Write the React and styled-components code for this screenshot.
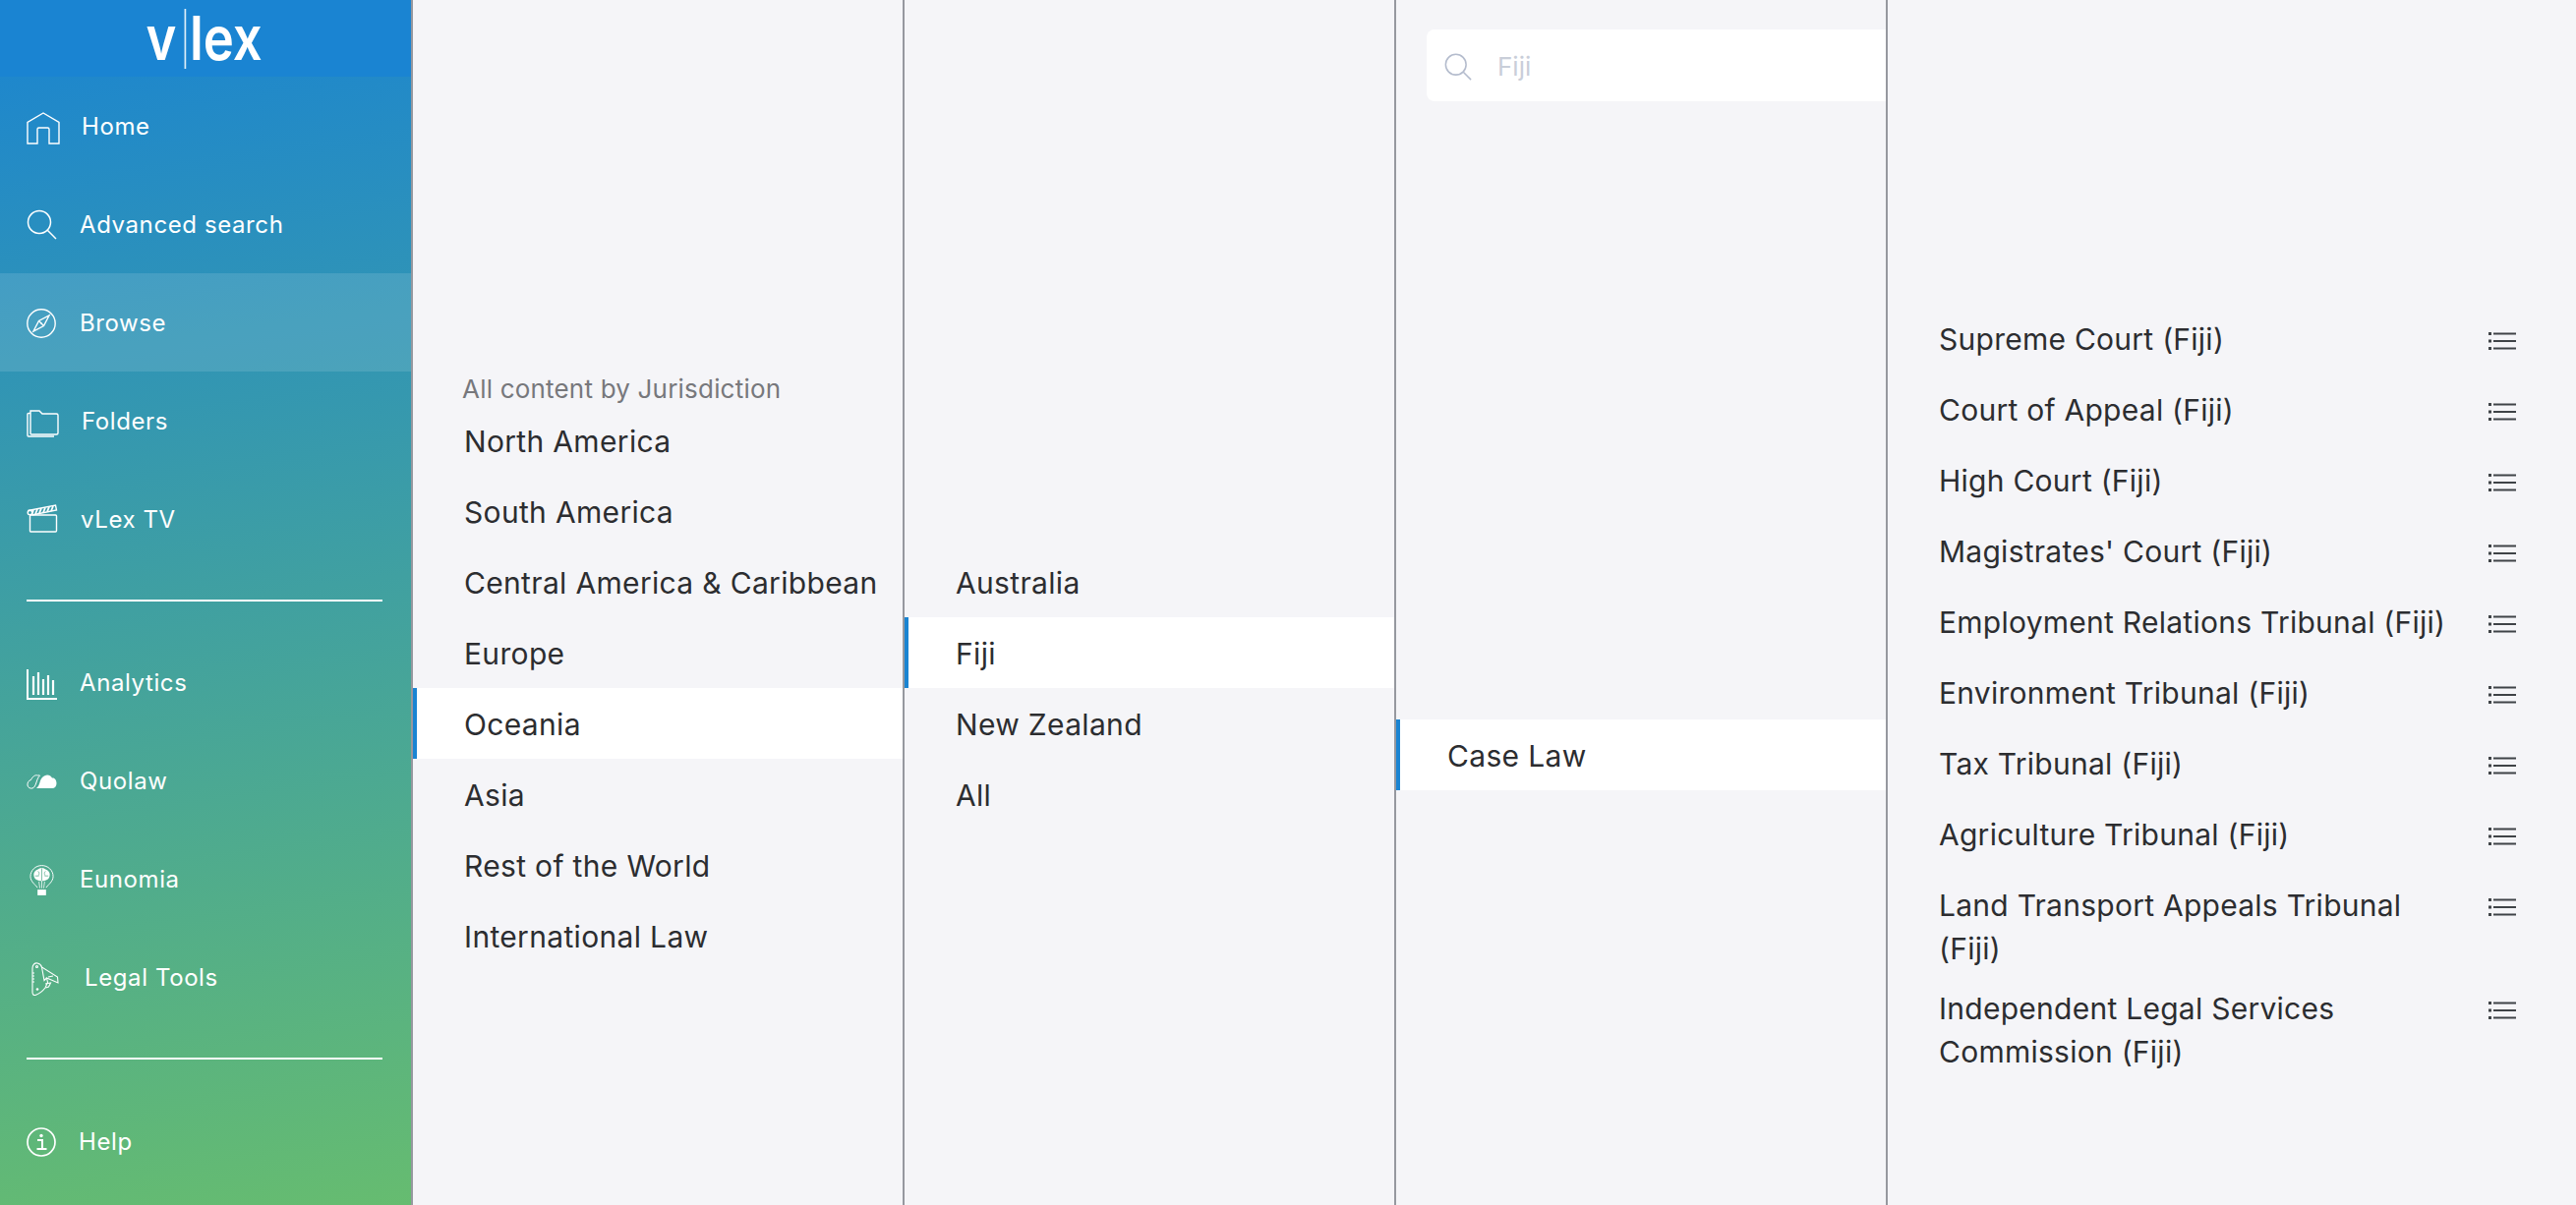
import React from "react";
import styled, { createGlobalStyle } from "styled-components";

const Global = createGlobalStyle`
  html, body { margin: 0; padding: 0; height: 100%; }
  body { font-family: Inter, "Liberation Sans", sans-serif; background: #f5f5f8; overflow: hidden; }
  * { box-sizing: border-box; }
`;

const Page = styled.div`
  display: flex;
  width: 2620px;
  height: 1226px;
  overflow: hidden;
  background: #f5f5f8;
`;

const Sidebar = styled.nav`
  flex: 0 0 420px;
  height: 1226px;
  border-right: 2px solid #96989f;
  background: linear-gradient(172deg, #1a84d2 0%, #66bc70 100%);
  display: flex;
  flex-direction: column;
`;

const Logo = styled.div`
  height: 78px;
  background: #1a84d2;
  display: flex;
  align-items: center;
  justify-content: center;
  flex: none;
`;

const LogoText = styled.span`
  color: #fff;
  font-size: 62px;
  font-weight: 600;
  line-height: 78px;
  display: flex;
  align-items: center;
  transform: scaleX(0.85);
  margin-right: 3px;
`;

const LogoBar = styled.i`
  width: 2px;
  height: 61px;
  background: rgba(255, 255, 255, 0.85);
  margin: 0 4px 0 10px;
`;

const NavItem = styled.a`
  height: 100px;
  flex: none;
  display: flex;
  align-items: center;
  padding-left: 27px;
  color: #fff;
  font-size: 24px;
  letter-spacing: 0.6px;
  background: ${(p) => (p.$active ? "rgba(255,255,255,0.12)" : "transparent")};
`;

const IconSlot = styled.span`
  width: ${(p) => p.$w}px;
  padding-left: ${(p) => p.$pad || 0}px;
  margin-top: ${(p) => p.$dy || 0}px;
  flex: none;
  display: flex;
  align-items: center;
  svg { display: block; }
`;

const Divider = styled.hr`
  margin: ${(p) => p.$m};
  border: 0;
  height: 2px;
  width: 362px;
  background: #fff;
  flex: none;
  align-self: flex-start;
  margin-left: 27px;
`;

const Column = styled.section`
  flex: 0 0 ${(p) => p.$w || 500}px;
  height: 1226px;
  border-right: ${(p) => (p.$last ? "0" : "2px solid #96989f")};
  padding-top: ${(p) => p.$top}px;
  display: flex;
  flex-direction: column;
`;

const Heading = styled.div`
  height: 32px;
  line-height: 31px;
  padding-left: 50px;
  font-size: 26px;
  letter-spacing: 0.2px;
  color: #77787c;
`;

const Row = styled.div`
  height: 72px;
  flex: none;
  display: flex;
  align-items: center;
  padding-top: 2px;
  padding-left: ${(p) => (p.$active ? 48 : 52)}px;
  margin-top: ${(p) => p.$gap || 0}px;
  font-size: 30px;
  letter-spacing: 0.33px;
  color: #2c2d30;
  background: ${(p) => (p.$active ? "#fff" : "transparent")};
  border-left: ${(p) => (p.$active ? "4px solid #1a84d2" : "0")};
`;

const SearchBox = styled.div`
  height: 73px;
  margin-left: 31px;
  border-radius: 8px 0 0 8px;
  background: #fff;
  display: flex;
  align-items: center;
  padding: 2px 0 0 18px;
  gap: 26px;
  font-size: 26px;
  color: #c9ced9;
  flex: none;
`;

const CourtList = styled.div`
  display: flex;
  flex-direction: column;
`;

const Court = styled.div`
  display: flex;
  justify-content: space-between;
  align-items: flex-start;
  padding: ${(p) => (p.$multi ? "15px 61px 2px 52px" : "15px 61px 13px 52px")};
  font-size: 30px;
  letter-spacing: 0.26px;
  line-height: 44px;
  color: #2c2d30;
`;

const CourtName = styled.span`
  width: 520px;
`;

const ListBtn = styled.span`
  flex: none;
  margin-top: 14px;
  svg { display: block; }
`;

const s = { fill: "none", stroke: "#fff", strokeWidth: 1.4 };

const Home = () => (
  <svg width="34" height="33" viewBox="0 0 34 33" {...s}>
    <path d="M1 32V10.500L17 1l16 9.500V32H23V17.500c0-1-.5-1.500-1.500-1.500h-9c-1 0-1.500.5-1.500 1.500V32z" />
  </svg>
);
const Search = ({ color = "#fff", w = 1.8, size = 31 }) => (
  <svg width={size} height={size} viewBox="0 0 31 31" fill="none" stroke={color} strokeWidth={w}>
    <circle cx="13" cy="13" r="11.500" />
    <path d="M21.300 21.300 30 30" />
  </svg>
);
const Compass = () => (
  <svg width="30" height="30" viewBox="0 0 30 30" {...s}>
    <circle cx="15" cy="15" r="14.200" />
    <path d="M23 7 17.500 17.500 7 23 12.500 12.500zM12.500 12.500l5 5" />
    <circle cx="15" cy="15" r=".8" fill="#fff" stroke="none" />
  </svg>
);
const Folder = () => (
  <svg width="33" height="28" viewBox="0 0 33 28" {...s}>
    <path d="M4 1h9l3 3h14.500c1 0 1.500.5 1.500 1.500v18c0 1-.5 1.500-1.500 1.500H5c-.7 0-1-.5-1-1.200z" />
    <path d="M4 3.500H2c-.7 0-1 .4-1 1V26c0 .7.400 1 1 1h26" />
  </svg>
);
const Clapper = () => (
  <svg width="32" height="29" viewBox="0 0 32 29" {...s}>
    <rect x="3.500" y="11" width="27" height="17" rx="1" />
    <path d="M1.500 6.500 29.500 1l1 5-25 5" />
    <path d="M7 6 5.500 10M11 5l-2 5M15 4.200l-2 5M19 3.500l-2 5M23 2.700l-2 5M27 2l-2 5" strokeWidth="1.800" />
    <circle cx="3.500" cy="8.500" r="2.300" />
  </svg>
);
const Bars = () => (
  <svg width="31" height="31" viewBox="0 0 31 31" fill="none" stroke="#fff">
    <path d="M1 0v30h30" strokeWidth="2" />
    <path d="M7 7v19M12 3v23M17 10v16M22 6v20M27 11v15" strokeWidth="2.200" />
  </svg>
);
const Cloud = () => (
  <svg width="31" height="16" viewBox="0 0 31 16">
    <path d="M10 15 C14 12 13 7 16 4c3-3.500 8-3.500 10 .5 3-.3 4.500 2.500 4.500 5.500 0 3-1.800 5-4.500 5z" fill="#fff" />
    <path d="M11.500 2C9 1 6 3 4.500 6.500 2 7 .7 9.500 1 12c.4 2.500 3 3.500 5 3 2-.6 3-3 4-6 .7-2.500 2-5.500 3.500-7-1-.4-1.500-.2-2 0z" fill="none" stroke="#fff" strokeWidth="1" />
  </svg>
);
const Bulb = () => (
  <svg width="25" height="33" viewBox="0 0 26 33">
    <path d="M8.500 24.500C6 21 1 18 1 12.500 1 6 6.500 1 13 1s12 5 12 11.500c0 5.500-5 8.500-7.500 12" fill="none" stroke="#fff" strokeWidth="1" />
    <path d="M13 3.500c-2 0-3 1-4 1.500-2.500.5-4.500 3-4.500 5.500 0 3 1.500 5.500 4 6 1.500 1 3 1 4.500.5 1.500.5 3 .5 4.500-.5 2.500-.5 4-3 4-6 0-2.500-2-5-4.500-5.500-1-.5-2-1.500-4-1.500z" fill="#fff" />
    <path d="M9 7c1.500 1 1.500 3 .5 4.500M13 4v13M17 7c-1.500 1-1.500 3-.5 4.500M6 12h4M16 12h4" fill="none" stroke="#5aae8e" strokeWidth=".8" />
    <path d="M10 18l1 7M16 18l-1 7M13 17v8" stroke="#fff" strokeWidth=".8" fill="none" />
    <rect x="8.500" y="26.500" width="9" height="6" fill="#fff" />
  </svg>
);
const Knife = () => (
  <svg width="28" height="34" viewBox="0 0 28 34" {...s} strokeWidth="1.100">
    <path d="M1 6C1 2.500 3.500.5 6 1c2 .4 4 2 4.500 4L26.500 15l.5 6-11.500-5 1 4.500L14 26c-3 4-6 6-10 7.500-2 .5-3-1-3-3z" />
    <path d="M10.500 5 13 18.500l2.500-2.500M22 14l-5 1M14 22l5.500-1-2 4-3 1" />
    <circle cx="5.500" cy="4.500" r="1" />
    <circle cx="6" cy="27.500" r="1.300" fill="#fff" stroke="none" />
    <path d="M1 11h2M1 14h2M1 17h2M1 20h2" />
  </svg>
);
const Info = () => (
  <svg width="30" height="30" viewBox="0 0 30 30" fill="none" stroke="#fff">
    <circle cx="15" cy="15" r="14" strokeWidth="1.700" />
    <path d="M11 13h5v9M10.500 22h10" strokeWidth="2" />
    <circle cx="15" cy="8.500" r="1.700" fill="#fff" stroke="none" />
  </svg>
);
const ListIcon = () => (
  <svg width="28" height="20" viewBox="0 0 28 20" fill="#3f4347">
    <rect x="0" y="1" width="3" height="3" />
    <rect x="0" y="8.500" width="3" height="3" />
    <rect x="0" y="16" width="3" height="3" />
    <rect x="5" y="1.500" width="23" height="2" />
    <rect x="5" y="9" width="23" height="2" />
    <rect x="5" y="16.500" width="23" height="2" />
  </svg>
);

const nav1 = [
  { label: "Home", icon: <Home />, w: 56, dy: 5 },
  { label: "Advanced search", icon: <Search w={1.5} />, w: 54, dy: 1 },
  { label: "Browse", icon: <Compass />, w: 54, dy: 2, active: true },
  { label: "Folders", icon: <Folder />, w: 56, dy: 6 },
  { label: "vLex TV", icon: <Clapper />, w: 55, dy: -2 },
];
const nav2 = [
  { label: "Analytics", icon: <Bars />, w: 54, dy: 4 },
  { label: "Quolaw", icon: <Cloud />, w: 54, dy: 2 },
  { label: "Eunomia", icon: <Bulb />, w: 54, pad: 3, dy: 2 },
  { label: "Legal Tools", icon: <Knife />, w: 59, pad: 5, dy: 4 },
];

const courts = [
  "Supreme Court (Fiji)",
  "Court of Appeal (Fiji)",
  "High Court (Fiji)",
  "Magistrates' Court (Fiji)",
  "Employment Relations Tribunal (Fiji)",
  "Environment Tribunal (Fiji)",
  "Tax Tribunal (Fiji)",
  "Agriculture Tribunal (Fiji)",
  "Land Transport Appeals Tribunal (Fiji)",
  "Independent Legal Services Commission (Fiji)",
];

const Item = ({ label, icon, w, pad, dy, active }) => (
  <NavItem $active={active}>
    <IconSlot $w={w} $pad={pad} $dy={dy}>
      {icon}
    </IconSlot>
    {label}
  </NavItem>
);

const RowList = ({ items, active }) =>
  items.map((t) => (
    <Row key={t} $active={t === active}>
      {t}
    </Row>
  ));

export default function App() {
  return (
    <Page>
      <Global />
      <Sidebar>
        <Logo>
          <LogoText>
            v<LogoBar />lex
          </LogoText>
        </Logo>
        {nav1.map((n) => (
          <Item key={n.label} {...n} />
        ))}
        <Divider $m="32px 0 32px" />
        {nav2.map((n) => (
          <Item key={n.label} {...n} />
        ))}
        <Divider $m="32px 0 33px" />
        <Item label="Help" icon={<Info />} w={53} dy={2} />
      </Sidebar>
      <Column $top={380}>
        <Heading>All content by Jurisdiction</Heading>
        <RowList
          items={[
            "North America",
            "South America",
            "Central America & Caribbean",
            "Europe",
            "Oceania",
            "Asia",
            "Rest of the World",
            "International Law",
          ]}
          active="Oceania"
        />
      </Column>
      <Column $top={556}>
        <RowList items={["Australia", "Fiji", "New Zealand", "All"]} active="Fiji" />
      </Column>
      <Column $top={30}>
        <SearchBox>
          <Search color="#b4bccd" w={1.7} size={28} />
          Fiji
        </SearchBox>
        <Row $gap={629} $active>
          Case Law
        </Row>
      </Column>
      <Column $top={308} $w={700} $last>
        <CourtList>
          {courts.map((c) => (
            <Court key={c} $multi={c.length > 36}>
              <CourtName>{c}</CourtName>
              <ListBtn>
                <ListIcon />
              </ListBtn>
            </Court>
          ))}
        </CourtList>
      </Column>
    </Page>
  );
}
